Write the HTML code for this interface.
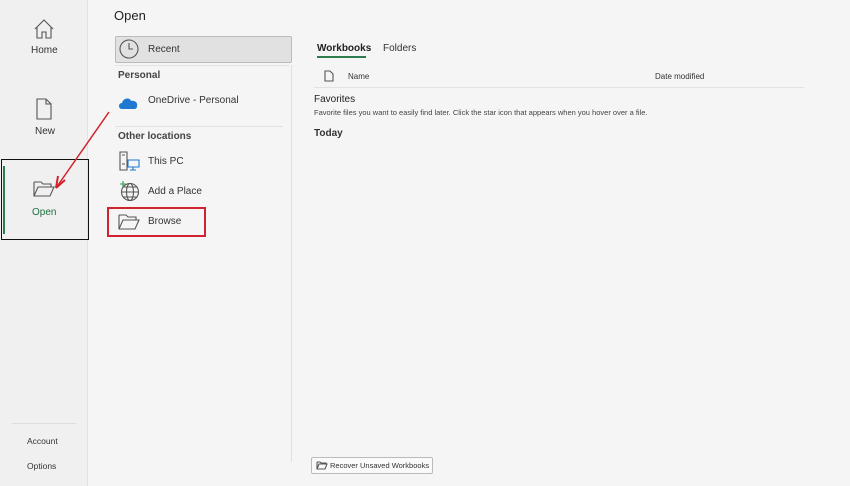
<!DOCTYPE html>
<html><head><meta charset="utf-8"><style>
*{margin:0;padding:0;box-sizing:border-box}
body{width:850px;height:486px;background:#f5f5f5;font-family:"Liberation Sans",sans-serif;color:#222;position:relative;overflow:hidden}
.a{position:absolute}
.side{left:0;top:0;width:88px;height:486px;background:#f0f0f0;border-right:1px solid #e2e2e2}
.t{font-size:10px;color:#333}
svg{position:absolute;fill:none;stroke:#555;stroke-width:1.1}
</style></head><body>
<div class="a side"></div>
<svg style="left:33px;top:18px" width="22" height="22" viewBox="0 0 22 22"><path d="M2 11 L11 2 L20 11 M4 9 V20 H9 V14 H13 V20 H18 V9"/></svg>
<div class="a t" style="left:31px;top:45px;font-size:10px">Home</div>
<svg style="left:35px;top:98px" width="18" height="22" viewBox="0 0 18 22"><path d="M2 1 H11 L16 6 V21 H2 Z M11 1 V6 H16"/></svg>
<div class="a t" style="left:35px;top:126px">New</div>
<div class="a" style="left:1px;top:159px;width:88px;height:81px;border:1px solid #111"></div>
<div class="a" style="left:3px;top:166px;width:2px;height:68px;background:#2e7d4f"></div>
<svg style="left:33px;top:180px" width="22" height="18" viewBox="0 0 22 18"><path d="M1 2 H8 L10 4 H18 V7 M1 2 V16 H17 L21 7 H5 L1 16"/></svg>
<div class="a t" style="left:32px;top:207px;color:#1e6e3e">Open</div>
<div class="a" style="left:12px;top:423px;width:64px;height:1px;background:#ddd"></div>
<div class="a t" style="left:27px;top:436px;font-size:8.5px">Account</div>
<div class="a t" style="left:27px;top:461px;font-size:8.5px">Options</div>

<div class="a" style="left:114px;top:8px;font-size:13px;color:#222">Open</div>
<div class="a" style="left:115px;top:36px;width:177px;height:27px;background:#e1e1e1;border:1px solid #bbb;border-radius:2px"></div>
<svg style="left:118px;top:38px" width="22" height="22" viewBox="0 0 22 22"><circle cx="11" cy="11" r="9"/><path d="M11 5 V11 H15"/></svg>
<div class="a t" style="left:148px;top:44px">Recent</div>
<div class="a" style="left:115px;top:65px;width:174px;height:1px;background:#e2e2e2"></div>
<div class="a t" style="left:118px;top:70px;font-weight:bold;color:#444">Personal</div>
<svg style="left:118px;top:96px;fill:#1f78d1;stroke:none" width="20" height="14" viewBox="0 0 20 14"><path d="M4 13 C0 13 0 7 4 7 C5 2 12 1 13 5 C17 4 20 7 19 10 C19 12 18 13 16 13 Z"/></svg>
<div class="a t" style="left:148px;top:95px">OneDrive - Personal</div>
<div class="a" style="left:115px;top:126px;width:168px;height:1px;background:#e2e2e2"></div>
<div class="a t" style="left:118px;top:131px;font-weight:bold;color:#444">Other locations</div>
<svg style="left:118px;top:151px" width="22" height="22" viewBox="0 0 22 22"><path d="M2 1 H9 V19 H2 Z M4 4 H7 M4 13 H7"/><path d="M10 9 H21 V16 H10 Z M15 16 V19 M12 19 H18" stroke="#1f78d1"/></svg>
<div class="a t" style="left:148px;top:156px">This PC</div>
<svg style="left:118px;top:180px" width="22" height="22" viewBox="0 0 22 22"><circle cx="12" cy="12" r="8.5"/><ellipse cx="12" cy="12" rx="3.5" ry="8.5"/><path d="M3.5 12 H20.5 M5 7 H19 M5 17 H19"/><path d="M5 1 V7 M2 4 H8" stroke="#2e9e4f"/></svg>
<div class="a t" style="left:148px;top:186px">Add a Place</div>
<div class="a" style="left:107px;top:207px;width:99px;height:30px;border:2px solid #d1222e"></div>
<svg style="left:118px;top:213px" width="22" height="18" viewBox="0 0 22 18"><path d="M1 2 H8 L10 4 H18 V7 M1 2 V16 H17 L21 7 H5 L1 16"/></svg>
<div class="a t" style="left:148px;top:216px">Browse</div>
<svg style="left:52px;top:110px;stroke:#d1222e;stroke-width:1.5" width="60" height="82" viewBox="0 0 60 82"><path d="M57 2 L4 78"/><path d="M4 78 L6 66 M4 78 L13 70" stroke-width="2"/></svg>

<div class="a" style="left:291px;top:65px;width:1px;height:397px;background:#e0e0e0"></div>
<div class="a t" style="left:317px;top:43px;font-weight:bold;color:#222">Workbooks</div>
<div class="a" style="left:317px;top:56px;width:49px;height:2px;background:#2e7d4f"></div>
<div class="a t" style="left:383px;top:43px">Folders</div>
<svg style="left:324px;top:70px" width="10" height="12" viewBox="0 0 10 12"><path d="M1 1 H6 L9 4 V11 H1 Z"/></svg>
<div class="a t" style="left:348px;top:72px;font-size:8px">Name</div>
<div class="a t" style="left:655px;top:72px;font-size:8px">Date modified</div>
<div class="a" style="left:314px;top:87px;width:490px;height:1px;background:#e2e2e2"></div>
<div class="a t" style="left:314px;top:94px;color:#222">Favorites</div>
<div class="a t" style="left:314px;top:108px;font-size:7.5px;color:#444">Favorite files you want to easily find later. Click the star icon that appears when you hover over a file.</div>
<div class="a t" style="left:314px;top:128px;font-weight:bold;color:#333">Today</div>
<div class="a" style="left:311px;top:457px;width:122px;height:17px;background:#fafafa;border:1px solid #bbb;border-radius:2px"></div>
<svg style="left:316px;top:461px" width="12" height="9" viewBox="0 0 12 9"><path d="M1 1 H4 L5 2 H10 V3 M1 1 V8 H9 L11 3 H3 L1 8"/></svg>
<div class="a t" style="left:330px;top:461px;font-size:7.5px">Recover Unsaved Workbooks</div>
</body></html>
